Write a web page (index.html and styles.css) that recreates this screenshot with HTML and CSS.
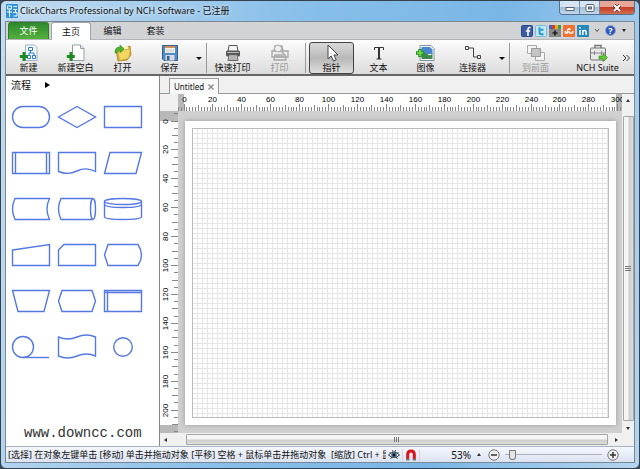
FILE: index.html
```
<!DOCTYPE html>
<html lang="zh-CN">
<head>
    <meta charset="utf-8">
    <title>ClickCharts Professional by NCH Software</title>
    <link rel="stylesheet" href="styles.css">
</head>

<body>
    <div class="window">
        <header class="titlebar">
            <svg class="app-icon" width="12" height="14" viewBox="0 0 12 14">
                <rect width="12" height="14" rx="1" fill="#2d92dc"/>
                <path d="M1.500 2h4v3h-4zM7.500 2.500H11M7.500 5.500H11M9.500 5.500v3M1 8h5M3.500 5v8M7 8.500h4v3.500H7.500" fill="none" stroke="#fff"/>
            </svg>
            <h1>ClickCharts Professional by NCH Software - 已注册</h1>
            <div class="window-buttons">
                <button class="minimize" aria-label="Minimize"><svg width="10" height="8" viewBox="0 0 10 8"><rect x="1" y="3.500" width="8" height="3" fill="#fff" stroke="#566474"/></svg></button>
                <button class="maximize" aria-label="Maximize"><svg width="10" height="8" viewBox="0 0 10 8"><rect x="1" y=".5" width="8" height="7" rx="1" fill="#fff" stroke="#566474"/><rect x="3.500" y="3" width="3" height="2" fill="#9ab" stroke="#566474"/></svg></button>
                <button class="close" aria-label="Close"><svg width="10" height="8" viewBox="0 0 10 8"><path d="M2 1l6 6M8 1l-6 6" stroke="#5c2a2a" stroke-width="3.400"/><path d="M2 1l6 6M8 1l-6 6" stroke="#fff" stroke-width="2"/></svg></button>
            </div>
        </header>

        <div class="client">
            <nav class="ribbon-tabs">
                <button class="file">文件</button>
                <button class="active">主页</button>
                <button>编辑</button>
                <button>套装</button>
                <div class="social">
                    <a href="#" aria-label="Facebook"><svg width="12" height="12" viewBox="0 0 12 12"><rect x=".5" y=".5" width="11" height="11" rx="1" fill="#3b5da5" stroke="#27468b"/><path d="M9.500 2.500H8.500Q7 2.500 7 4.200V11M4.800 6h4.400" fill="none" stroke="#fff" stroke-width="1.600"/></svg></a>
                    <a href="#" aria-label="Twitter"><svg width="12" height="12" viewBox="0 0 12 12"><rect x=".5" y=".5" width="11" height="11" rx="1" fill="#c3e6f5" stroke="#76bbdc"/><path d="M4.500 2.200v5Q4.500 9.200 6.500 9.200H8.500M4.500 4.800h4" fill="none" stroke="#2c9ccb" stroke-width="2"/></svg></a>
                    <a href="#" aria-label="Google Plus"><svg width="12" height="12" viewBox="0 0 12 12"><rect y="3" width="12" height="9" fill="#898989"/><rect width="3" height="4" fill="#3f64c9"/><rect x="3" width="3" height="4" fill="#d33c30"/><rect x="6" width="3" height="4" fill="#e6b420"/><rect x="9" width="3" height="4" fill="#3a9a48"/><path d="M6 5.500v5M3.500 8h5" stroke="#222" stroke-width="1.700"/></svg></a>
                    <a href="#" aria-label="StumbleUpon"><svg width="12" height="12" viewBox="0 0 12 12"><rect width="12" height="12" rx="1" fill="#ee7132"/><path d="M2.300 6v1.500Q3.500 9 4.500 7.500V5Q6 2.500 7.500 5M6.200 6v1.500Q8 9 9.700 7.500V6" fill="none" stroke="#fff" stroke-width="1.400"/></svg></a>
                    <a href="#" aria-label="LinkedIn"><svg width="12" height="12" viewBox="0 0 12 12"><rect width="12" height="12" rx="1" fill="#2588bd"/><path d="M3 5v5M3 2v1.500M5.800 10V5M5.800 7Q6 5.500 7.500 5.500T9.200 7V10" fill="none" stroke="#fff" stroke-width="1.500"/></svg></a>
                    <button class="collapse" aria-label="Collapse"><svg width="6" height="5" viewBox="0 0 6 5"><path d="M1 1l2 2.500L5 1" fill="none" stroke="#555"/></svg></button>
                    <button class="help" aria-label="Help">?</button>
                    <button class="collapse" aria-label="Help menu"><svg width="6" height="5" viewBox="0 0 6 5"><path d="M1 1h4L3 4z" fill="#222"/></svg></button>
                </div>
            </nav>

            <div class="toolbar">
                <button class="tool">
                    <svg viewBox="0 0 20 18">
                        <path d="M6.500 1h9l2.500 2.500V16.500H6.500z" fill="#f6fafe" stroke="#9db3c5"/>
                        <path d="M9.500 3.500h4v3h-4zM13.500 11.500h3v3h-3zM8.500 11.500h3v3h-3zM11.500 6.500v2.500M10 11.500V9h5v2.500" fill="none" stroke="#2a7fc6"/>
                        <path d="M5 8v9M.8 12.500h8" stroke="#1c8b20" stroke-width="3"/>
                    </svg>
                    <span>新建</span>
                </button>
                <button class="tool">
                    <svg viewBox="0 0 20 18">
                        <path d="M6.500 1h8l3.500 3.500V16.500H6.500z" fill="#fff" stroke="#929da6"/>
                        <path d="M14.500 1v3.500H18" fill="#e6e9ec" stroke="#929da6"/>
                        <path d="M5 8v9M.8 12.500h8" stroke="#1c8b20" stroke-width="3"/>
                    </svg>
                    <span>新建空白</span>
                </button>
                <button class="tool">
                    <svg viewBox="0 0 20 18">
                        <path d="M3 5l5-2 2 1.500 7-2.500 1 9-4 5-9 1z" fill="#dcb44b" stroke="#b78a2d"/>
                        <path d="M6 5l9-3 1.500 10-8 4z" fill="#fff3b0"/>
                        <path d="M5 8l4-.5 1-1.500 7.500-1-2 9.500-9 2z" fill="#f1d65f" stroke="#c7a136" stroke-width=".7"/>
                        <path d="M2 9Q1.500 3 7 3V1l4 4-4 3.500V6Q4 6 4 9z" fill="#4bb52c" stroke="#2d861c" stroke-width=".6"/>
                    </svg>
                    <span>打开</span>
                </button>
                <button class="tool">
                    <svg viewBox="0 0 20 18">
                        <path d="M2.500 1.500h15v15H4l-1.500-1.500z" fill="#4e8cc8" stroke="#355f8f"/>
                        <path d="M5 2h10v7H5z" fill="#f5f2ea"/>
                        <path d="M5 2h10v2H5z" fill="#d68c56"/>
                        <path d="M6 6h8M6 8h8" stroke="#b7bcc0" stroke-width=".7"/>
                        <path d="M5.500 11h9v5.500h-9z" fill="#d4d9df"/>
                        <path d="M7 12h2.500v4H7z" fill="#325d91"/>
                    </svg>
                    <span>保存</span>
                </button>
                <button class="drop" aria-label="保存选项"></button>
                <i class="separator"></i>
                <button class="tool">
                    <svg viewBox="0 0 20 18">
                        <path d="M6 1.500h8l1 6H5z" fill="#f5f5f5" stroke="#555"/>
                        <rect x="3" y="6.500" width="14" height="6" rx="1.500" fill="#555"/>
                        <path d="M4 8.500h12" stroke="#bbb"/>
                        <path d="M6 11h8l1 5.500H5z" fill="#eee" stroke="#666"/>
                        <path d="M6.500 13h7M6 15h8" stroke="#777"/>
                    </svg>
                    <span>快速打印</span>
                </button>
                <button class="tool" disabled>
                    <svg viewBox="0 0 20 18">
                        <path d="M5 2h7l1 5H4zM2 7h16v6H2zM5 11h10l1 5H4z" fill="#eee" stroke="#a7a7a7" stroke-width="1.400"/>
                        <circle cx="8" cy="4.500" r="3.500" fill="#eee" stroke="#aaa"/>
                        <path d="M11 7l3 3M6 13h8" stroke="#aaa" stroke-width="1.500"/>
                    </svg>
                    <span>打印</span>
                </button>
                <i class="separator"></i>
                <button class="tool pressed">
                    <svg viewBox="0 0 20 18"><path d="M6 1v14l3.200-3 2.300 5 2.700-1.300-2.300-4.700H16z" fill="#fff" stroke="#444"/></svg>
                    <span>指针</span>
                </button>
                <button class="tool">
                    <svg viewBox="0 0 20 18"><path d="M5.500 6V3.500h9V6M7.500 15h5" fill="none" stroke="#333"/><path d="M10 3v12" stroke="#333" stroke-width="2"/></svg>
                    <span>文本</span>
                </button>
                <button class="tool">
                    <svg viewBox="0 0 20 18">
                        <path d="M4 1.500h11l3 3V16.500H4z" fill="#fff" stroke="#81929f"/>
                        <path d="M5.500 3h8.500l2.500 2.500V10h-11z" fill="#4a86cf"/>
                        <path d="M5.500 10q3-3 6 0t5-1v6h-11z" fill="#3d8a4c"/>
                        <path d="M4 5v8M0 9h8" stroke="#27921e" stroke-width="3.500"/>
                        <path d="M4 6v6M1 9h6" stroke="#79e052" stroke-width="1.500"/>
                    </svg>
                    <span>图像</span>
                </button>
                <button class="tool">
                    <svg viewBox="0 0 20 18"><path d="M2.500 2.500h3v3h-3zM14.500 11.500h3v3h-3zM5.500 4h5v9h4" fill="none" stroke="#444"/></svg>
                    <span>连接器</span>
                </button>
                <button class="drop" aria-label="连接器选项"></button>
                <i class="separator"></i>
                <button class="tool" disabled>
                    <svg viewBox="0 0 20 18">
                        <path d="M1.500 1.500h9v8h-9zM9.500 8.500h9v8h-9z" fill="#f5f5f5" stroke="#aaa"/>
                        <path d="M5.500 4.500h9v8h-9z" fill="#c4c4c4" stroke="#999"/>
                    </svg>
                    <span>到前面</span>
                </button>
                <button class="tool suite">
                    <svg viewBox="0 0 20 18">
                        <path d="M7 4V1.500h6V4" fill="none" stroke="#777" stroke-width="1.500"/>
                        <rect x="2.500" y="4" width="15" height="12" rx="1" fill="#e8e8e8" stroke="#777"/>
                        <path d="M3 9h14M6.500 7v4M13.500 7v4" stroke="#888"/>
                        <path d="M11 12h4V9.500l4.500 4-4.500 4V15h-4z" fill="#64c832" stroke="#38861d" stroke-width=".7"/>
                    </svg>
                    <span>NCH Suite</span>
                </button>
                <button class="more" aria-label="More"><svg width="8" height="8" viewBox="0 0 8 8"><path d="M1 1l3 3-3 3M4.500 1l3 3-3 3" fill="none" stroke="#333"/></svg></button>
            </div>

            <div class="content">
                <aside class="palette">
                    <h2>流程 <svg width="5" height="6" viewBox="0 0 5 6"><path d="M0 0l5 3-5 3z"/></svg></h2>
                    <div class="shapes">
                        <svg viewBox="0 0 40 24"><rect x="1.500" y="1.500" width="37" height="21" rx="10.500"/></svg>
                        <svg viewBox="0 0 40 24"><path d="M1.500 12L20 1.500 38.500 12 20 22.500z"/></svg>
                        <svg viewBox="0 0 40 24"><path d="M1.500 1.500h37v21h-37z"/></svg>

                        <svg viewBox="0 0 40 24"><path d="M1.500 1.500h37v21h-37zM4.500 1.500v21M35.500 1.500v21"/></svg>
                        <svg viewBox="0 0 40 24"><path d="M1.500 1.500h37v19Q29 15.500 20 20T1.500 20.500z"/></svg>
                        <svg viewBox="0 0 40 24"><path d="M7 1.500h31.500l-5.500 21H1.500z"/></svg>

                        <svg viewBox="0 0 40 24"><path d="M4 1.500h34.500Q33.500 12 38.500 22.500H4Q-1 12 4 1.500z"/></svg>
                        <svg viewBox="0 0 40 24"><path d="M36 1.500H4Q-1 12 4 22.500h32"/><ellipse cx="36" cy="12" rx="2.500" ry="10.500"/></svg>
                        <svg viewBox="0 0 40 24"><ellipse cx="20" cy="4.500" rx="18.500" ry="3"/><path d="M1.500 4.500v15.500Q3 22.500 20 22.500T38.500 20V4.500M1.500 7.500Q3 10.500 20 10.500T38.500 7.500"/></svg>

                        <svg viewBox="0 0 40 24"><path d="M1.500 7L38.500 1.500v21h-37z"/></svg>
                        <svg viewBox="0 0 40 24"><path d="M7 1.500h31.500v21h-37V7z"/></svg>
                        <svg viewBox="0 0 40 24"><path d="M5 1.500h30Q42 12 35 22.500H5L1.500 12z"/></svg>

                        <svg viewBox="0 0 40 24"><path d="M1.500 1.500h37l-5.500 21H7z"/></svg>
                        <svg viewBox="0 0 40 24"><path d="M5 1.500h30L38.500 12 35 22.500H5L1.500 12z"/></svg>
                        <svg viewBox="0 0 40 24"><path d="M1.500 1.500h37v21h-37zM1.500 3.500h37M4.500 1.500v21"/></svg>

                        <svg viewBox="0 0 40 24"><circle cx="12" cy="12" r="10.500"/><path d="M12 22.500h26"/></svg>
                        <svg viewBox="0 0 40 24"><path d="M1.500 2Q10.500 6 20 2T38.500 2v19Q29.500 17 20 21T1.500 21z"/></svg>
                        <svg viewBox="0 0 40 24"><circle cx="20" cy="12" r="9.300"/></svg>
                    </div>
                    <p class="site">www.downcc.com</p>
                </aside>

                <main class="workspace">
                    <div class="doc-tabs">
                        <div class="doc-tab">Untitled <button aria-label="Close tab"><svg width="6" height="6" viewBox="0 0 6 6"><path d="M.5.5l5 5M5.500.5l-5 5" stroke="#888" stroke-width="1.300"/></svg></button></div>
                    </div>
                    <div class="editor">
                        <div class="corner"></div>
                        <svg class="ruler" id="ruler-x"></svg>
                        <div class="scroll vertical">
                            <i class="arrow up"></i>
                            <div class="thumb"><i class="grip"></i></div>
                            <i class="arrow down"></i>
                        </div>
                        <svg class="ruler" id="ruler-y"></svg>
                        <div class="canvas">
                            <div class="page">
                                <div class="grid"></div>
                            </div>
                        </div>
                        <div class="scroll horizontal">
                            <i class="arrow left"></i>
                            <div class="thumb"><i class="grip"></i></div>
                            <i class="arrow right"></i>
                        </div>
                    </div>
                </main>
            </div>

            <footer class="statusbar">
                <p>[选择] 在对象左键单击 [移动] 单击并拖动对象 [平移] 空格 + 鼠标单击并拖动对象 &nbsp;[缩放] Ctrl + 鼠</p>
                <button class="toggle" aria-label="Preview"><svg width="12" height="12" viewBox="0 0 12 12"><path d="M.5 6Q6 0 11.500 6 6 11 .5 6z" fill="#fff" stroke="#333"/><circle cx="6" cy="6" r="2.800" fill="#37689b"/><circle cx="6" cy="6" r="1.300" fill="#111"/><path d="M1.500 3L3 4.500M4.500 1L5 3M7.500 1L7 3M10.500 3L9 4.500M2.500 10L4 8M9.500 10L8 8" stroke="#333" stroke-width=".8"/></svg></button>
                <button class="toggle" aria-label="Snap"><svg width="12" height="12" viewBox="0 0 12 12"><path d="M2.700 11V5.500Q2.700 2 6 2T9.300 5.500V11" fill="none" stroke="#d8131a" stroke-width="3"/><path d="M1.200 10.500h3M7.800 10.500h3" stroke="#777" stroke-width="2"/></svg></button>
                <div class="zoom">
                    <button class="percent">53% <i class="arrow up"></i></button>
                    <button class="round" aria-label="Zoom out"><svg width="12" height="12" viewBox="0 0 12 12"><circle cx="6" cy="6" r="5.200" fill="#eee" stroke="#777"/><path d="M3 6h6" stroke="#333" stroke-width="1.500"/></svg></button>
                    <input type="range" min="0" max="100" value="4" aria-label="Zoom">
                    <button class="round" aria-label="Zoom in"><svg width="12" height="12" viewBox="0 0 12 12"><circle cx="6" cy="6" r="5.200" fill="#eee" stroke="#777"/><path d="M3 6h6M6 3v6" stroke="#333" stroke-width="1.500"/></svg></button>
                </div>
            </footer>
        </div>
    </div>
    <script src="rulers.js"></script>
</body>

</html>
```

FILE: styles.css
```
* {
    box-sizing: border-box;
}

html,
body {
    margin: 0;
    height: 100%;
}

body {
    background: #3b4654;
    color: #111;
    font: 9px/12px "Noto Sans", "Noto Sans CJK SC", sans-serif;
    overflow: hidden;
}

button {
    margin: 0;
    padding: 0;
    border: 0;
    background: none;
    color: inherit;
    font: inherit;
}

svg {
    display: block;
    flex: none;
}

h1,
h2,
p {
    margin: 0;
    font-size: inherit;
    font-weight: normal;
}

.window {
    display: flex;
    flex-direction: column;
    height: 100vh;
    padding: 0 4px 5px;
    border: 1px solid #36414e;
    border-radius: 6px;
    background: linear-gradient(100deg, #c3dcf0 0, #8ac0ea 40%, #79b6e6 70%, #b5d5ef 100%);
}

/* title bar */

.titlebar {
    display: flex;
    align-items: center;
    flex: none;
    height: 20px;
    padding-left: 1px;
}

.titlebar h1 {
    flex: 1;
    margin-left: 2px;
    font-size: 9px;
    text-shadow: 0 0 4px #fff;
    white-space: nowrap;
}

.window-buttons {
    display: flex;
    align-self: flex-start;
    height: 14px;
    border: 1px solid #54708c;
    border-top: 0;
    border-radius: 0 0 4px 4px;
    overflow: hidden;
}

.window-buttons button {
    display: flex;
    align-items: center;
    justify-content: center;
    width: 20px;
    border-right: 1px solid #6d8aa5;
    background: linear-gradient(#d7e5f2 45%, #a5bfd8 50%, #c0d8ec);
}

.window-buttons .close {
    width: 34px;
    border: 0;
    background: linear-gradient(#e5a698 45%, #c33f2a 50%, #d56c50);
}

.client {
    display: flex;
    flex-direction: column;
    flex: 1;
    min-height: 0;
    border: 1px solid #7a8794;
    background: #f0f0f0;
}

/* ribbon */

.ribbon-tabs {
    display: flex;
    align-items: flex-end;
    flex: none;
    height: 18px;
    padding-left: 2px;
    border-bottom: 1px solid #b2b6ba;
    background: #d2d3d5;
}

.ribbon-tabs > button {
    width: 43px;
    height: 17px;
}

.ribbon-tabs .file {
    width: 41px;
    margin-right: 2px;
    border: 1px solid #2f7d2a;
    border-bottom: 0;
    border-radius: 3px 3px 0 0;
    background: linear-gradient(#2e8a2f, #54b03b);
    color: #fff;
}

.ribbon-tabs .active {
    width: 40px;
    margin-bottom: -1px;
    height: 18px;
    border: 1px solid #a0a4a8;
    border-bottom: 0;
    border-radius: 3px 3px 0 0;
    background: #fff;
}

.social {
    display: flex;
    align-items: center;
    align-self: center;
    gap: 2px;
    margin-left: auto;
    padding-right: 4px;
}

.social .collapse {
    display: flex;
    justify-content: center;
    width: 12px;
}

.social .help {
    width: 11px;
    height: 11px;
    border: 1px solid #8fa5d8;
    border-radius: 50%;
    background: #2e58b8;
    color: #fff;
    font-weight: bold;
    line-height: 9px;
}

.toolbar {
    display: flex;
    align-items: center;
    gap: 2px;
    flex: none;
    height: 36px;
    padding-top: 2px;
    border-bottom: 2px solid #666;
    background: linear-gradient(#fcfcfc, #dcdcdc);
}

.tool {
    display: flex;
    flex-direction: column;
    align-items: center;
    flex: none;
    width: 45px;
    height: 32px;
    padding-top: 1px;
    border: 1px solid transparent;
    white-space: nowrap;
}

.tool svg {
    width: 20px;
    height: 18px;
}

.tool:disabled {
    color: #999;
}

.tool.pressed {
    border-color: #444;
    border-radius: 3px;
    background: linear-gradient(#d8d8d8, #b9b9b9 50%, #ddd);
}

.tool.suite {
    margin-left: auto;
}

.more {
    width: 12px;
}

.drop {
    width: 9px;
    height: 30px;
}

.drop::before {
    content: "";
    display: block;
    margin: auto;
    width: 0;
    border: 3px solid transparent;
    border-top-color: #111;
    border-bottom: 0;
}

.separator {
    width: 1px;
    height: 30px;
    margin: 0 1px;
    background: #999;
}

.content {
    display: flex;
    flex: 1;
    min-height: 0;
}

/* shape palette */

.palette {
    display: flex;
    flex-direction: column;
    flex: none;
    width: 154px;
    border-right: 1px solid #888;
    background: #fff;
}

.palette h2 {
    display: flex;
    align-items: center;
    gap: 14px;
    padding: 1px 5px;
    font-size: 10px;
    line-height: 16px;
}

.shapes {
    display: grid;
    grid-template-columns: repeat(3, 40px);
    gap: 22px 6px;
    padding: 11px 5px;
}

.shapes svg {
    width: 40px;
    height: 24px;
    overflow: visible;
    fill: none;
    stroke: #5579e4;
    stroke-width: 1.4;
}

.site {
    margin: auto 18px 4px;
    color: #333;
    font: 14px/18px "Liberation Mono", monospace;
}

/* document area */

.workspace {
    display: flex;
    flex-direction: column;
    flex: 1;
    min-width: 0;
}

.doc-tabs {
    display: flex;
    align-items: flex-end;
    flex: none;
    height: 18px;
    padding-left: 9px;
    border-bottom: 1px solid #999;
}

.doc-tab {
    display: flex;
    align-items: center;
    gap: 4px;
    height: 16px;
    margin-bottom: -1px;
    padding: 0 4px;
    border: 1px solid #999;
    border-bottom: 0;
    background: #f8f8f8;
    font-size: 8px;
}

.editor {
    display: grid;
    grid-template-columns: 18px 1fr 12px;
    grid-template-rows: 17px 1fr 13px;
    flex: 1;
    min-height: 0;
}

.ruler {
    width: 100%;
    height: 100%;
    background: #fff;
    font: 8px "Liberation Sans", sans-serif;
    text-anchor: middle;
}

.ruler path {
    stroke: #888;
}

.ruler .outside {
    fill: #b8b8b8;
}

.canvas {
    display: flex;
    min-width: 0;
    padding: 10px 6px 8px 7px;
    background: #d0d0d0;
}

.page {
    display: flex;
    flex: 1;
    padding: 7px;
    background: #fff;
    box-shadow: 0 0 5px #999;
}

.grid {
    flex: 1;
    border: 1px solid #bbb;
    background:
        repeating-linear-gradient(to right, transparent 0 4px, #e6e6e6 4px 5px),
        repeating-linear-gradient(transparent 0 4px, #e6e6e6 4px 5px);
}

.scroll {
    display: flex;
    align-items: center;
    background: #f0f0f0;
}

.scroll.vertical {
    grid-row: span 2;
    flex-direction: column;
    padding: 5px 0 3px;
    gap: 14px;
}

.scroll.horizontal {
    grid-column: 1 / -1;
    gap: 19px;
    padding: 0 16px 0 4px;
}

.scroll .thumb {
    display: flex;
    align-items: center;
    justify-content: center;
    flex: 1;
    border: 1px solid #a5a5a5;
    border-radius: 1px;
}

.vertical .thumb {
    width: 11px;
    background: linear-gradient(to right, #f5f5f5 40%, #cfcfcf 60%, #ddd);
}

.horizontal .thumb {
    height: 11px;
    background: linear-gradient(#f5f5f5 40%, #cfcfcf 60%, #ddd);
}

.grip {
    width: 6px;
    height: 5px;
    background: repeating-linear-gradient(to right, #777 0 1px, transparent 1px 2px);
}

.vertical .grip {
    background: repeating-linear-gradient(#777 0 1px, transparent 1px 2px);
}

.arrow {
    width: 0;
    height: 0;
    border: 2px solid transparent;
}

.arrow.up {
    border-top: 0;
    border-bottom: 3px solid #333;
}

.arrow.down {
    border-bottom: 0;
    border-top: 3px solid #333;
}

.arrow.left {
    border-left: 0;
    border-right: 3px solid #333;
}

.arrow.right {
    border-right: 0;
    border-left: 3px solid #333;
}

.vertical .arrow.down {
    margin-top: -8px;
}

.horizontal .arrow.right {
    margin-left: -12px;
}

/* status bar */

.statusbar {
    display: flex;
    align-items: center;
    flex: none;
    height: 16px;
    padding: 0 15px 0 2px;
    border-top: 1px solid #a9b2bf;
    background: linear-gradient(#f4f7fc, #dbe2f1);
}

.statusbar p {
    flex: 1;
    overflow: hidden;
    white-space: nowrap;
}

.toggle {
    display: flex;
    justify-content: center;
    width: 17px;
    border-right: 1px solid #cfd6e2;
}

.zoom {
    display: flex;
    align-items: center;
    margin-left: 31px;
}

.percent {
    display: flex;
    align-items: center;
    gap: 6px;
    margin-right: 7px;
    font-size: 10px;
}

.zoom input {
    appearance: none;
    width: 97px;
    height: 12px;
    margin: 0 5px;
    background: linear-gradient(#aab0ba, #aab0ba) center / 100% 1px no-repeat;
}

.zoom input::-webkit-slider-thumb {
    appearance: none;
    width: 7px;
    height: 10px;
    border: 1px solid #777;
    border-radius: 1px 1px 4px 4px;
    background: #e5e5e5;
}
```

FILE: rulers.js
```
const SVG_NS = 'http://www.w3.org/2000/svg';
const PX_PER_MM = 1.446;

function add(parent, name, attrs, text) {
    const el = document.createElementNS(SVG_NS, name);
    for (const key in attrs) el.setAttribute(key, attrs[key]);
    if (text !== undefined) el.textContent = text;
    parent.appendChild(el);
}

// start and end are the margins outside the page, in pixels
function drawRuler(svg, vertical, step, start, end) {
    const box = svg.getBoundingClientRect();
    const length = vertical ? box.height : box.width;
    const depth = vertical ? box.width : box.height;
    svg.replaceChildren();

    for (const [from, size] of [[0, start], [length - end, end]]) {
        add(svg, 'rect', vertical
            ? { class: 'outside', x: 0, y: from, width: depth, height: size }
            : { class: 'outside', x: from, y: 0, width: size, height: depth });
    }

    let d = '';
    for (let mm = -step * Math.floor(start / PX_PER_MM / step); start + mm * PX_PER_MM < length; mm += step) {
        const p = Math.floor(start + mm * PX_PER_MM) + 0.5;
        const tick = mm % 20 === 0 ? 7 : mm % 10 === 0 ? 6 : 4;
        d += vertical ? `M${depth - tick} ${p}H${depth}` : `M${p} ${depth - tick}V${depth}`;
        if (mm >= 0 && mm % 20 === 0) {
            add(svg, 'text', vertical
                ? { transform: `translate(8 ${p}) rotate(-90)` }
                : { x: p, y: 8 }, mm);
        }
    }
    add(svg, 'path', { d });
}

function drawRulers() {
    drawRuler(document.getElementById('ruler-x'), false, 2, 6, 6);
    drawRuler(document.getElementById('ruler-y'), true, 5, 10, 8);
}

drawRulers();
window.addEventListener('resize', drawRulers);
```
